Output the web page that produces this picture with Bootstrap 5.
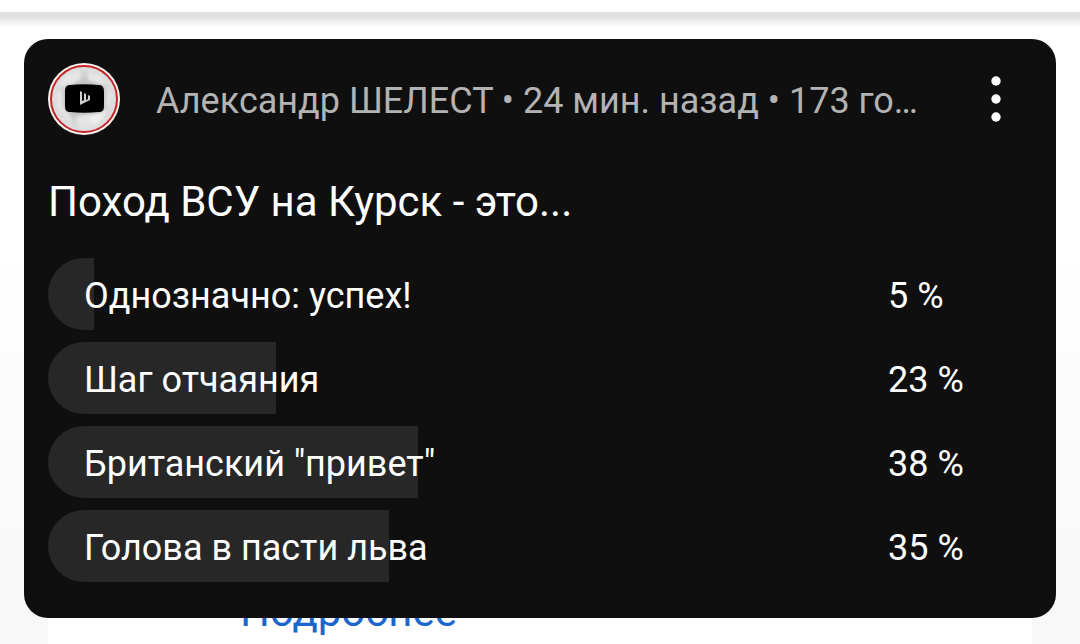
<!DOCTYPE html>
<html lang="ru">
<head>
<meta charset="utf-8">
<meta name="viewport" content="width=device-width, initial-scale=1">
<title>Опрос</title>
<link href="https://cdn.jsdelivr.net/npm/bootstrap@5.3.0/dist/css/bootstrap.min.css" rel="stylesheet">
<style>
  body {
    font-family: Roboto, "Noto Sans", sans-serif;
    font-size: 36px;
    line-height: 42px;
    min-height: 100vh;
    background: linear-gradient(#fff 250px, #f8f8f8 600px);
    overflow: hidden;
  }
  .topbar { height: 12px; }
  .topbar-shadow {
    height: 15px;
    background: linear-gradient(#e3e3e3 0, #dedede 4px, #fff 100%);
  }
  .poll-card {
    margin: 12px 24px 0;
    padding: 24px 24px 36px;
    border-radius: 24px;
    background: #0f0f0f;
    color: #fff;
    z-index: 1;
  }
  .avatar { width: 72px; height: 72px; }
  .meta { color: #b3b3b3; }
  .poll-head { gap: 36px; }
  .line-text { padding-top: 4px; }
  .menu-btn { width: 72px; height: 72px; }
  .poll-title {
    font-size: 42px;
    font-weight: 400;
    line-height: 48px;
    margin: 43px 0 32px;
  }
  .poll-list { gap: 12px; }
  .poll-row { height: 72px; }
  .poll-fill { height: 72px; background: #272727; border-radius: 36px 0 0 36px; }
  .poll-label { padding-left: 36px; }
  .poll-share { width: 144px; }
  .below {
    margin: -30px 48px 0;
    padding: 0 192px;
    background: #fff;
    height: 60px;
  }
  .below a { color: #1a66cc; font-size: 42px; line-height: 48px; }
</style>
</head>
<body>
<header class="topbar bg-white"></header>
<div class="topbar-shadow"></div>

<article class="poll-card position-relative">
  <div class="poll-head d-flex align-items-center">
    <svg class="avatar flex-shrink-0" viewBox="0 0 72 72" role="img" aria-label="Канал">
      <defs>
        <radialGradient id="paper"><stop offset="0" stop-color="#a8a8a8"/><stop offset=".6" stop-color="#c8c8c8"/><stop offset="1" stop-color="#e2e2e2"/></radialGradient>
        <filter id="soft"><feGaussianBlur stdDeviation="1.5"/></filter>
      </defs>
      <circle cx="36" cy="36" r="36" fill="#fbf3ee"/>
      <circle cx="36" cy="36" r="33" fill="url(#paper)"/>
      <g filter="url(#soft)">
        <path d="M12 18l10-8 9-2 3 7-10 6-12 3zM40 8l12 4 8 10-10-2-10-3z" fill="#e6e6e6"/>
        <path d="M7 30l7-4 1 18 6 8 5 9-9-5-8-11zM27 54l12-3 9 3 4 5-10 7-12-2zM60 24l5 8-3 14-4-6z" fill="#e4e4e4"/>
        <path d="M40 52l14-2 7-6-6 12-9 5z" fill="#efefef"/>
      </g>
      <circle cx="36" cy="36" r="33" fill="none" stroke="#c4242a" stroke-width="2"/>
      <path d="M22 22c9-1 19-1 29 0 4 0 5 3 5 7v13c0 5-1 7-5 7-10 1-20 1-29 0-4 0-5-2-5-7V29c0-4 1-7 5-7z" fill="#000"/>
      <path d="M32 28l2 1v9l2-1v-7l2 1v6l2-1v-4l2 1v4l-10 5z" fill="#cfcfcf"/>
    </svg>
    <div class="meta line-text text-truncate flex-grow-1">Александр ШЕЛЕСТ • 24 мин. назад • 173 го…</div>
    <button type="button" class="menu-btn btn p-0 border-0 flex-shrink-0 d-flex" aria-label="Меню">
      <svg width="72" height="72" viewBox="0 0 72 72" fill="#fff" aria-hidden="true">
        <circle cx="36" cy="18" r="4.7"/><circle cx="36" cy="36" r="4.7"/><circle cx="36" cy="54" r="4.7"/>
      </svg>
    </button>
  </div>

  <h1 class="poll-title">Поход ВСУ на Курск - это...</h1>

  <div class="poll-list d-grid">
    <div class="poll-row position-relative d-flex align-items-center">
      <div class="poll-fill position-absolute top-0 start-0" style="width:4.7%"></div>
      <div class="poll-label line-text position-relative flex-grow-1">Однозначно: успех!</div>
      <div class="poll-share line-text position-relative">5 %</div>
    </div>
    <div class="poll-row position-relative d-flex align-items-center">
      <div class="poll-fill position-absolute top-0 start-0" style="width:23.2%"></div>
      <div class="poll-label line-text position-relative flex-grow-1">Шаг отчаяния</div>
      <div class="poll-share line-text position-relative">23 %</div>
    </div>
    <div class="poll-row position-relative d-flex align-items-center">
      <div class="poll-fill position-absolute top-0 start-0" style="width:37.6%"></div>
      <div class="poll-label line-text position-relative flex-grow-1">Британский "привет"</div>
      <div class="poll-share line-text position-relative">38 %</div>
    </div>
    <div class="poll-row position-relative d-flex align-items-center">
      <div class="poll-fill position-absolute top-0 start-0" style="width:34.7%"></div>
      <div class="poll-label line-text position-relative flex-grow-1">Голова в пасти льва</div>
      <div class="poll-share line-text position-relative">35 %</div>
    </div>
  </div>
</article>

<section class="below">
  <a href="#" class="text-decoration-none">Подробнее</a>
</section>
<script src="https://cdn.jsdelivr.net/npm/bootstrap@5.3.0/dist/js/bootstrap.bundle.min.js"></script>
</body>
</html>
